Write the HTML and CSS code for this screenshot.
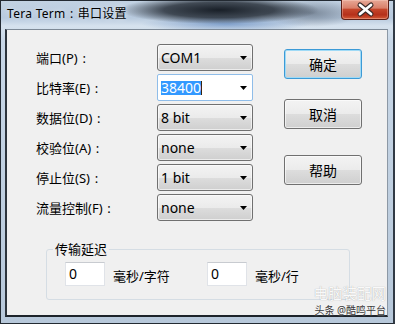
FILE: index.html
```html
<!DOCTYPE html>
<html lang="zh-CN">
<head>
    <meta charset="UTF-8">
    <title>Tera Term：串口设置</title>
    <link rel="stylesheet" href="styles.css">
</head>
<body>
    <div class="window">
        <div class="titlebar">
            <span class="title">Tera Term<span class="colon">:</span>串口设置</span>
            <div class="close-btn">
                <svg width="46" height="18" viewBox="0 0 46 18">
                    <path d="M18 5 L29 14 M29 5 L18 14" stroke="#3a2a28" stroke-width="5" stroke-linecap="round" fill="none"/>
                    <path d="M18 5 L29 14 M29 5 L18 14" stroke="#ffffff" stroke-width="2.8" stroke-linecap="round" fill="none"/>
                </svg>
            </div>
        </div>

        <div class="client">
            <div class="top">
                <div class="form">
                    <div class="row">
                        <label>端口(P)<span class="colon">:</span></label>
                        <div class="combo"><span class="value">COM1</span><svg class="arrow" width="7" height="4"><polygon points="0,0 7,0 3.5,4" fill="#000"/></svg></div>
                    </div>
                    <div class="row">
                        <label>比特率(E)<span class="colon">:</span></label>
                        <div class="combo combo-edit"><span class="value"><span class="selected">38400</span></span><svg class="arrow" width="7" height="4"><polygon points="0,0 7,0 3.5,4" fill="#000"/></svg></div>
                    </div>
                    <div class="row">
                        <label>数据位(D)<span class="colon">:</span></label>
                        <div class="combo"><span class="value">8 bit</span><svg class="arrow" width="7" height="4"><polygon points="0,0 7,0 3.5,4" fill="#000"/></svg></div>
                    </div>
                    <div class="row">
                        <label>校验位(A)<span class="colon">:</span></label>
                        <div class="combo"><span class="value">none</span><svg class="arrow" width="7" height="4"><polygon points="0,0 7,0 3.5,4" fill="#000"/></svg></div>
                    </div>
                    <div class="row">
                        <label>停止位(S)<span class="colon">:</span></label>
                        <div class="combo"><span class="value">1 bit</span><svg class="arrow" width="7" height="4"><polygon points="0,0 7,0 3.5,4" fill="#000"/></svg></div>
                    </div>
                    <div class="row">
                        <label>流量控制(F)<span class="colon">:</span></label>
                        <div class="combo"><span class="value">none</span><svg class="arrow" width="7" height="4"><polygon points="0,0 7,0 3.5,4" fill="#000"/></svg></div>
                    </div>
                </div>

                <div class="buttons">
                    <button class="btn btn-default">确定</button>
                    <button class="btn btn-cancel">取消</button>
                    <button class="btn btn-help">帮助</button>
                </div>
            </div>

            <!-- 传输延迟 -->
            <fieldset class="delay">
                <legend>传输延迟</legend>
                <div class="delay-row">
                    <div class="delay-item">
                        <div class="textbox">0</div>
                        <span class="unit">毫秒/字符</span>
                    </div>
                    <div class="delay-item">
                        <div class="textbox">0</div>
                        <span class="unit">毫秒/行</span>
                    </div>
                </div>
            </fieldset>

            <div class="watermark">
                <div class="wm-big">电脑装配网</div>
                <div class="wm-small">头条 @酷鸣平台</div>
            </div>
        </div>
    </div>
</body>
</html>
```

FILE: styles.css
```css
* {
    margin: 0;
    padding: 0;
    box-sizing: border-box;
}

body {
    width: 395px;
    height: 324px;
    overflow: hidden;
    background: #2a323c;
    font-family: "Noto Sans", "Noto Sans CJK SC", sans-serif;
}

.window {
    width: 395px;
    height: 324px;
    display: flex;
    flex-direction: column;
    border: 1px solid #232a32;
    border-right: 2px solid #313a45;
    background:
        radial-gradient(ellipse 100px 14px at 218px 9px, rgba(16, 22, 30, 0.95), rgba(16, 22, 30, 0.72) 55%, rgba(16, 22, 30, 0) 100%),
        radial-gradient(ellipse 85px 8px at 225px 23px, rgba(95, 135, 190, 0.7), rgba(95, 135, 190, 0) 100%),
        radial-gradient(ellipse 50px 14px at 310px 12px, rgba(70, 82, 98, 0.55), rgba(70, 82, 98, 0) 100%),
        linear-gradient(to bottom, #c2d2e3 0, #b8cade 17px, #d6e2ee 25px, #c8d7e7 40px, #b7c8da 100%);
}

.titlebar {
    height: 28px;
    display: flex;
    justify-content: space-between;
    align-items: flex-start;
    padding-left: 6px;
}

.title {
    margin-top: 5px;
    font-size: 12px;
    line-height: 16px;
    letter-spacing: 0.3px;
    color: #000;
    text-shadow: 0 0 5px rgba(255, 255, 255, 0.7);
}

.colon {
    display: inline-block;
    width: 1em;
    text-align: center;
}

.close-btn {
    width: 48px;
    height: 20px;
    margin-top: -1px;
    margin-right: 4px;
    border: 1px solid #5e1f16;
    border-top: none;
    border-radius: 0 0 4px 4px;
    background: linear-gradient(to bottom, #e7a896 0%, #d9806a 42%, #c4452a 50%, #b5301a 78%, #d45a36 100%);
    box-shadow: inset 0 0 0 1px rgba(255, 220, 210, 0.35);
}

.close-btn svg {
    display: block;
}

.client {
    position: relative;
    flex: 1;
    margin: 0 5px 6px 4px;
    background: #f0f0f0;
    border-top: 1px solid #7d8996;
    border-left: 2px solid #2d343c;
    border-right: 1px solid #8c98a5;
    border-bottom: 2px solid #1d232a;
}

.top {
    display: flex;
    padding-top: 14px;
}

.form {
    padding-left: 29px;
}

.row {
    display: flex;
    align-items: center;
    height: 27px;
    margin-bottom: 3px;
}

.row:last-child {
    margin-bottom: 0;
}

.row label {
    width: 121px;
    font-size: 13px;
    color: #000;
}

.combo {
    width: 96px;
    height: 27px;
    display: flex;
    justify-content: space-between;
    align-items: center;
    padding: 0 5px 0 3px;
    border: 1px solid #707070;
    border-radius: 3px;
    background: linear-gradient(to bottom, #f3f3f3 0%, #ebebeb 50%, #dddddd 51%, #cfcfcf 100%);
    box-shadow: inset 0 0 0 1px rgba(255, 255, 255, 0.6);
    font-size: 14px;
    color: #000;
}

.combo-edit {
    background: #fff;
    border-color: #8fbde9;
    border-radius: 2px;
    box-shadow: none;
}

.selected {
    display: inline-block;
    height: 14px;
    line-height: 14px;
    background: #3399ff;
    color: #fff;
    border-right: 1px solid #3a2410;
}

.arrow {
    display: block;
}

.buttons {
    display: flex;
    flex-direction: column;
    margin-left: 31px;
    margin-top: 5px;
}

.btn {
    width: 78px;
    height: 30px;
    border: 1px solid #707070;
    border-radius: 3px;
    background: linear-gradient(to bottom, #f3f3f3 0%, #ebebeb 50%, #dddddd 51%, #cfcfcf 100%);
    box-shadow: inset 0 0 0 1px rgba(255, 255, 255, 0.6);
    font-family: "Noto Sans CJK SC", sans-serif;
    font-size: 14px;
    color: #000;
}

.btn-default {
    border-color: #3c9ad6;
    box-shadow: inset 0 0 0 1px #9fdaf6;
}

.btn-cancel {
    margin-top: 20px;
}

.btn-help {
    margin-top: 26px;
}

.delay {
    width: 302px;
    margin: 19px 0 0 39px;
    padding: 4px 0 13px 0;
    border: 1px solid #d5dde4;
    border-radius: 3px;
}

.delay legend {
    margin-left: 6px;
    padding: 0 2px;
    font-size: 13px;
    line-height: 18px;
    color: #000;
}

.delay-row {
    display: flex;
    padding-left: 18px;
}

.delay-item {
    width: 142px;
    display: flex;
    align-items: center;
    gap: 8px;
}

.textbox {
    width: 40px;
    height: 24px;
    padding-left: 3px;
    background: #fff;
    border: 1px solid #e0e3e8;
    border-top-color: #c8cbd0;
    font-size: 14px;
    line-height: 22px;
    color: #000;
}

.unit {
    padding-top: 3px;
    font-size: 13px;
    color: #000;
}

.watermark {
    position: absolute;
    right: 1px;
    bottom: -3px;
    text-align: right;
}

.wm-big {
    font-size: 14.5px;
    line-height: 19px;
    color: rgba(255, 255, 255, 0.95);
    text-shadow: 0 0 1px rgba(0, 0, 0, 0.35);
}

.wm-small {
    font-size: 10px;
    line-height: 15px;
    color: #3a3a3a;
    text-shadow: 0 0 2px #fff;
}
```
